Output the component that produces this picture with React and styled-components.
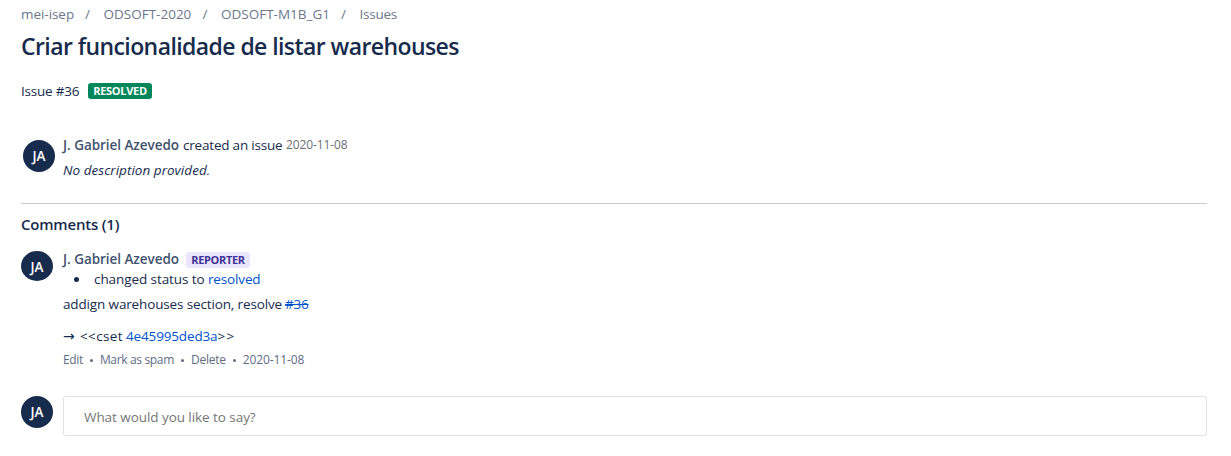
import React from "react";
import styled, { createGlobalStyle } from "styled-components";

const GlobalStyle = createGlobalStyle`
  body {
    margin: 0;
    background: #fff;
    color: #172b4d;
    font-family: "Open Sans", "Noto Sans", sans-serif;
    font-size: 13.5px;
    line-height: 20px;
  }
`;

const Page = styled.main`
  box-sizing: border-box;
  height: 456px;
  padding: 4px 24px 0 21px;
  overflow: hidden;
  white-space: nowrap;
`;

const Text = styled.span`
  letter-spacing: ${(p) => p.$track || 0}px;
`;

const Breadcrumbs = styled.nav`
  display: flex;
  height: 20px;
  color: #6b778c;
`;

const Crumb = styled.span`
  width: ${(p) => p.$width}px;
  letter-spacing: ${(p) => p.$track || 0}px;
`;

const Slash = styled.span`
  width: 8px;
  margin: 0 12px 0 9px;
  text-align: center;
`;

const Title = styled.h1`
  margin: 8px 0 0;
  font-size: 23px;
  line-height: 28px;
  font-weight: 600;
  letter-spacing: -0.58px;
`;

const IssueMeta = styled.div`
  display: flex;
  align-items: center;
  height: 20px;
  margin-top: 21px;
`;

const Lozenge = styled.span`
  box-sizing: border-box;
  width: ${(p) => p.$width}px;
  height: 16px;
  margin-top: ${(p) => p.$drop || 0}px;
  border-radius: 3px;
  background: ${(p) => p.$bg};
  color: ${(p) => p.$fg};
  font-size: 11px;
  font-weight: 700;
  line-height: 16px;
  text-align: center;
  letter-spacing: ${(p) => p.$track || 0}px;
`;

const Entry = styled.section`
  display: grid;
  grid-template-columns: 32px 1fr;
  column-gap: 10px;
  margin-top: ${(p) => p.$top}px;
`;

const Avatar = styled.div`
  width: 32px;
  height: ${(p) => p.$height || 32}px;
  margin: ${(p) => p.$offset || "0"};
  border-radius: 50%;
  background: #172b4d;
  color: #fff;
  font-size: 13.5px;
  font-weight: 600;
  line-height: 32px;
  text-align: center;
`;

const Line = styled.div`
  display: flex;
  align-items: center;
  height: 20px;
  margin-top: ${(p) => p.$top || 0}px;
`;

const Author = styled.span`
  width: ${(p) => p.$width}px;
  color: #42526e;
  font-weight: 600;
  letter-spacing: ${(p) => p.$track || 0}px;
`;

const Description = styled.p`
  margin: 5px 0 0;
  font-style: italic;
  letter-spacing: 0.03px;
`;

const Muted = styled.time`
  color: #6b6e76;
  font-size: 12px;
  letter-spacing: ${(p) => p.$track || 0}px;
`;

const Divider = styled.hr`
  height: 1px;
  margin: 23px 0 0;
  border: 0;
  background: #ccc;
`;

const Heading = styled.h2`
  margin: 10px 0 0;
  font-size: 15px;
  line-height: 20px;
  font-weight: 600;
  letter-spacing: -0.2px;
`;

const Bullet = styled.i`
  width: 5px;
  height: 5px;
  margin: 0 15px 0 11px;
  border-radius: 50%;
  background: #172b4d;
`;

const Arrow = styled.span`
  width: 17px;
  font-family: "DejaVu Sans", sans-serif;
  font-size: 14px;
`;

const Link = styled.a`
  color: #0052cc;
  letter-spacing: ${(p) => p.$track || 0}px;
  text-decoration: ${(p) => (p.$struck ? "line-through" : "none")};
`;

const Actions = styled.div`
  display: flex;
  height: 20px;
  margin-top: 4px;
  color: #5e6c84;
  font-size: 12px;
`;

const Dot = styled.i`
  width: 3px;
  height: 3px;
  margin: 9px 7px 0;
  border-radius: 50%;
  background: #5e6c84;
`;

const CommentInput = styled.input`
  box-sizing: border-box;
  width: 100%;
  height: 40px;
  padding: 1px 20px 0;
  border: 1px solid #dfe1e6;
  border-radius: 3px;
  outline: 0;
  background: #fff;
  font: inherit;
  letter-spacing: -0.06px;

  &::placeholder {
    color: #757575;
    opacity: 1;
  }
`;

export default function App() {
  return (
    <>
      <GlobalStyle />
      <Page>
        <Breadcrumbs>
          <Crumb $width={53.5} $track={-0.05}>mei-isep</Crumb>
          <Slash>/</Slash>
          <Crumb $width={88.5} $track={0}>ODSOFT-2020</Crumb>
          <Slash>/</Slash>
          <Crumb $width={109.5} $track={0}>ODSOFT-M1B_G1</Crumb>
          <Slash>/</Slash>
          <Crumb $width={38} $track={-0.25}>Issues</Crumb>
        </Breadcrumbs>
        <Title>Criar funcionalidade de listar warehouses</Title>
        <IssueMeta>
          <Crumb $width={67} $track={-0.22}>Issue #36</Crumb>
          <Lozenge $width={64} $bg="#00875a" $fg="#fff" $track={-0.3}>RESOLVED</Lozenge>
        </IssueMeta>

        <Entry $top={34}>
          <Avatar $offset="5px 0 0 2px">JA</Avatar>
          <div>
            <Line>
              <Author $width={120} $track={-0.04}>J. Gabriel Azevedo</Author>
              <Crumb $width={103} $track={-0.2}>created an issue</Crumb>
              <Muted $track={-0.1}>2020-11-08</Muted>
            </Line>
            <Description>No description provided.</Description>
          </div>
        </Entry>

        <Divider />
        <Heading>Comments (1)</Heading>

        <Entry $top={15}>
          <Avatar $height={30} $offset="2px 0 0 0">JA</Avatar>
          <div>
            <Line>
              <Author $width={123} $track={-0.04}>J. Gabriel Azevedo</Author>
              <Lozenge $width={64} $drop={2} $bg="#eae6ff" $fg="#403294" $track={-0.35}>REPORTER</Lozenge>
            </Line>
            <Line>
              <Bullet />
              <Crumb $width={114} $track={-0.08}>changed status to</Crumb>
              <Link $track={-0.15}>resolved</Link>
            </Line>
            <Line $top={5}>
              <Crumb $width={222} $track={-0.14}>addign warehouses section, resolve</Crumb>
              <Link $struck $track={-0.2}>#36</Link>
            </Line>
            <Line $top={12}>
              <Arrow>→</Arrow>
              <Crumb $width={46} $track={0.35}>&lt;&lt;cset</Crumb>
              <Link $track={-0.15}>4e45995ded3a</Link>
              <Text $track={1.3}>&gt;&gt;</Text>
            </Line>
            <Actions>
              <Text $track={-0.35}>Edit</Text>
              <Dot />
              <Text $track={-0.34}>Mark as spam</Text>
              <Dot />
              <Text $track={-0.25}>Delete</Text>
              <Dot />
              <Text $track={-0.1}>2020-11-08</Text>
            </Actions>
          </div>
        </Entry>

        <Entry $top={26}>
          <Avatar>JA</Avatar>
          <CommentInput placeholder="What would you like to say?" />
        </Entry>
      </Page>
    </>
  );
}
